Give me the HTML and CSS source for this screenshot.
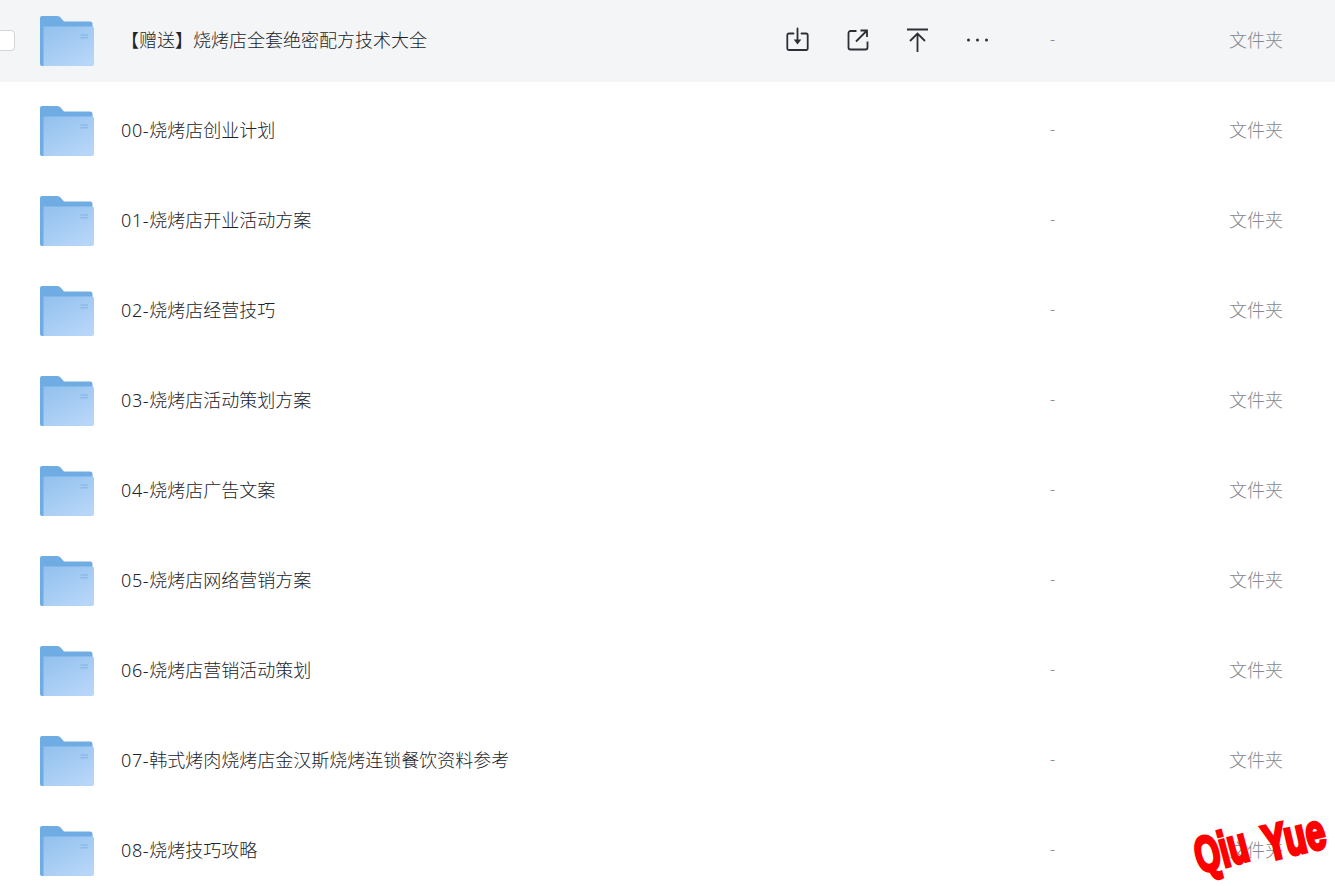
FILE: index.html
```html
<!DOCTYPE html>
<html lang="zh">
<head>
<meta charset="utf-8">
<title>文件列表</title>
<link rel="stylesheet" href="styles.css">
</head>
<body>
<svg class="defs" width="0" height="0" aria-hidden="true">
  <defs>
    <linearGradient id="front" x1="0.1" y1="0" x2="0.75" y2="1">
      <stop offset="0" stop-color="#93c1ee"/>
      <stop offset="1" stop-color="#b7d6f8"/>
    </linearGradient>
    <symbol id="folder" viewBox="0 0 54 50">
      <path d="M0 2a2 2 0 0 1 2-2h15c2 0 3 .8 4 2l3 3.500h26a2.500 2.500 0 0 1 2.500 2.500V14H0z" fill="#70ace4"/>
      <path d="M3 10.500h49a2 2 0 0 1 2 2V48a2 2 0 0 1-2 2H3z" fill="url(#front)"/>
      <path d="M0 8h3.500v42H2a2 2 0 0 1-2-2z" fill="#70ace4"/>
      <path d="M40.500 19h7.500M40.500 21.800h7.500" stroke="#7fb2e4" stroke-width="1" fill="none"/>
    </symbol>
  </defs>
</svg>
<main class="list">
  <div class="row active">
    <span class="check"></span>
    <svg class="folder"><use href="#folder"/></svg>
    <span class="name">【赠送】烧烤店全套绝密配方技术大全</span>
    <div class="actions">
      <svg class="icon" viewBox="0 0 26 26"><path d="M8.500 6.500H3.800a1.500 1.500 0 0 0-1.500 1.500v13.500a1.500 1.500 0 0 0 1.500 1.500h17.400a1.500 1.500 0 0 0 1.500-1.500V8a1.500 1.500 0 0 0-1.500-1.500h-4.700M12.500 1.500v13" fill="none" stroke="#2c3036" stroke-width="1.800" stroke-linecap="round"/><path d="M8.700 12.500h7.600l-3.800 5z" fill="#2c3036"/></svg>
      <svg class="icon" viewBox="0 0 26 26"><path d="M11.500 4H5.500a2 2 0 0 0-2 2v14.500a2 2 0 0 0 2 2h15a2 2 0 0 0 2-2V14.500M11 14.500l10.500-10.500M15.500 3.500h6.500v6.500" fill="none" stroke="#2c3036" stroke-width="1.800"/></svg>
      <svg class="icon" viewBox="0 0 26 26"><path d="M2 2.500h21M12.500 25V6.500M5 14l7.500-7.500L20 14" fill="none" stroke="#2c3036" stroke-width="1.800"/></svg>
      <svg class="icon" viewBox="0 0 26 26"><circle cx="3.500" cy="13" r="1.500" fill="#2c3036"/><circle cx="12.500" cy="13" r="1.500" fill="#2c3036"/><circle cx="21.500" cy="13" r="1.500" fill="#2c3036"/></svg>
    </div>
    <span class="size">-</span>
    <span class="type">文件夹</span>
  </div>
  <div class="row"><span class="check-space"></span><svg class="folder"><use href="#folder"/></svg><span class="name"><span class="num">00-</span>烧烤店创业计划</span><span class="size">-</span><span class="type">文件夹</span></div>
  <div class="row"><span class="check-space"></span><svg class="folder"><use href="#folder"/></svg><span class="name"><span class="num">01-</span>烧烤店开业活动方案</span><span class="size">-</span><span class="type">文件夹</span></div>
  <div class="row"><span class="check-space"></span><svg class="folder"><use href="#folder"/></svg><span class="name"><span class="num">02-</span>烧烤店经营技巧</span><span class="size">-</span><span class="type">文件夹</span></div>
  <div class="row"><span class="check-space"></span><svg class="folder"><use href="#folder"/></svg><span class="name"><span class="num">03-</span>烧烤店活动策划方案</span><span class="size">-</span><span class="type">文件夹</span></div>
  <div class="row"><span class="check-space"></span><svg class="folder"><use href="#folder"/></svg><span class="name"><span class="num">04-</span>烧烤店广告文案</span><span class="size">-</span><span class="type">文件夹</span></div>
  <div class="row"><span class="check-space"></span><svg class="folder"><use href="#folder"/></svg><span class="name"><span class="num">05-</span>烧烤店网络营销方案</span><span class="size">-</span><span class="type">文件夹</span></div>
  <div class="row"><span class="check-space"></span><svg class="folder"><use href="#folder"/></svg><span class="name"><span class="num">06-</span>烧烤店营销活动策划</span><span class="size">-</span><span class="type">文件夹</span></div>
  <div class="row"><span class="check-space"></span><svg class="folder"><use href="#folder"/></svg><span class="name"><span class="num">07-</span>韩式烤肉烧烤店金汉斯烧烤连锁餐饮资料参考</span><span class="size">-</span><span class="type">文件夹</span></div>
  <div class="row"><span class="check-space"></span><svg class="folder"><use href="#folder"/></svg><span class="name"><span class="num">08-</span>烧烤技巧攻略</span><span class="size">-</span><span class="type">文件夹</span></div>
</main>
<div class="mark"><span class="qiu">Qiu</span><span class="yue">Yue</span></div>
</body>
</html>
```
FILE: styles.css
```css
* { box-sizing: border-box; }
html, body { margin: 0; height: 100%; overflow: hidden; background: #fff; }
body { font-family: "Noto Sans", "Noto Sans CJK SC", sans-serif; position: relative; }
.defs { position: absolute; }
.list { display: flex; flex-direction: column; gap: 8px; }
.row { flex: none; height: 82px; display: flex; align-items: center; padding-right: 52px; font-size: 18px; font-weight: 300; }
.row.active { background: #f4f5f6; }
.check { flex: none; width: 21px; height: 21px; margin-left: -6px; margin-right: 25px; margin-bottom: 1px; background: #fff; border: 1px solid #d3d5d8; border-radius: 4px; }
.check-space { flex: none; width: 40px; }
.folder { flex: none; width: 54px; height: 50px; margin-right: 27px; }
.name { flex: none; width: 929px; margin-bottom: 4px; color: #202329; white-space: nowrap; }
.row.active .name { width: 664px; }
.num { letter-spacing: 0.6px; }
.actions { flex: none; width: 265px; margin-bottom: 2px; display: flex; gap: 34px; }
.icon { flex: none; width: 26px; height: 26px; }
.size { flex: none; margin-bottom: 4px; color: #85888e; font-size: 16px; }
.type { margin-left: auto; margin-bottom: 4px; color: #85888e; white-space: nowrap; }
.mark { position: absolute; right: 0; bottom: 0; width: 160px; height: 80px; color: #f00; font-family: "Liberation Sans", sans-serif; font-weight: 700; font-size: 50px; line-height: 1; -webkit-text-stroke: 3.5px #f00; }
.qiu { position: absolute; left: 14px; top: 27px; transform-origin: left top; transform: rotate(-15deg) scale(0.64, 1); }
.yue { position: absolute; left: 83px; top: 14px; transform-origin: left top; transform: rotate(-13deg) scale(0.7, 1); }
```
